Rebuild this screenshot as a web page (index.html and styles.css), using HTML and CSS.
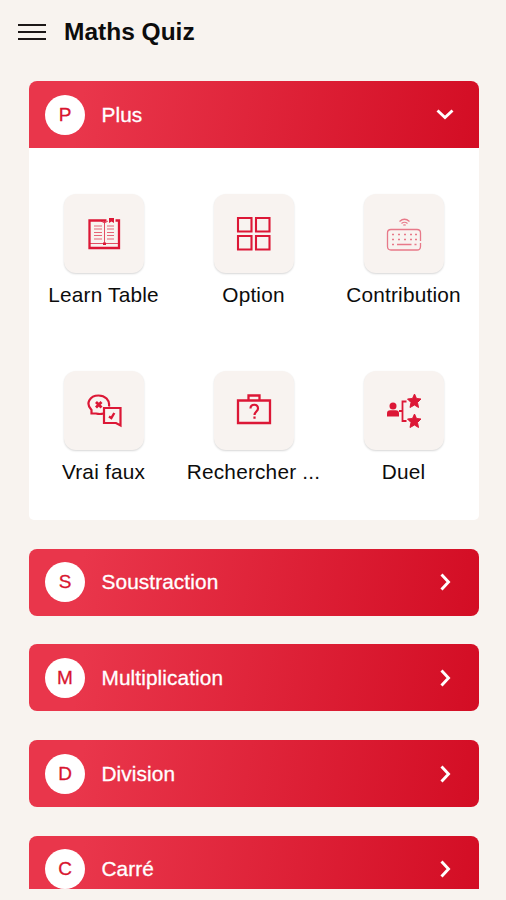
FILE: index.html
```html
<!DOCTYPE html>
<html lang="fr">
<head>
    <meta charset="UTF-8">
    <meta name="viewport" content="width=device-width, initial-scale=1.0">
    <title>Maths Quiz</title>
    <link rel="stylesheet" href="styles.css">
</head>
<body>
    <header class="topbar">
        <button class="menu-btn" aria-label="Menu">
            <span></span>
            <span></span>
            <span></span>
        </button>
        <h1>Maths Quiz</h1>
    </header>

    <main class="list">
        <section class="card open">
            <div class="card-header">
                <span class="badge">P</span>
                <span class="title">Plus</span>
                <svg class="chevron" viewBox="0 0 20 20"><path d="M2.500 5.500l7.500 7L17.500 5.500"/></svg>
            </div>
            <div class="panel">
                <div class="item">
                    <div class="tile">
                        <svg class="icon" viewBox="0 0 36 36">
                            <path d="M20.500 4.500H3.500V32H33V4.500H29.500" stroke-width="2.300"/>
                            <path d="M3.500 27.500H33M18.500 5V27M15 5L18.500 7L22 5" stroke-width="1" opacity=".75"/>
                            <path d="M8 10h8M8 13h8M8 16.500h8M8 19.500h8M8 23h8M21 10h7M21 13h7M21 16.500h7M21 19.500h7M21 23h7" stroke-width="1" opacity=".65"/>
                            <path class="fill" d="M23 2h5v5l-2.500-1.500L23 7zM17 26.500h3v2.500h-3z"/>
                        </svg>
                    </div>
                    <div class="label">Learn Table</div>
                </div>
                <div class="item">
                    <div class="tile">
                        <svg class="icon" viewBox="0 0 36 36">
                            <path d="M2 2h13.500v13.500H2zM20 2h13.500v13.500H20zM2 20h13.500v13.500H2zM20 20h13.500v13.500H20z" stroke-width="2.100"/>
                        </svg>
                    </div>
                    <div class="label">Option</div>
                </div>
                <div class="item">
                    <div class="tile">
                        <svg class="icon light" viewBox="0 0 36 36">
                            <path d="M34.500 27v3.500q0 3.500-3.500 3.500H5q-3.500 0-3.500-3.500V17q0-3.500 3.500-3.500h26q3.500 0 3.500 3.500v8" stroke-width="1.300"/>
                            <path d="M6 18.500h2m4 0h2m4 0h2m4 0h2m3 0h2M6 23.500h2m4 0h2m4 0h2m4 0h2m3 0h2M6 28.500h2m20.500 0h2" stroke-width="1.700"/>
                            <path d="M11 28.500h14.500" stroke-width="1.500"/>
                            <path d="M13.500 5.500q5-4.500 10 0M15.500 7.500q3-2.500 6 0M17.300 9.300q1.200-1 2.400 0" stroke-width="1.200"/>
                        </svg>
                    </div>
                    <div class="label">Contribution</div>
                </div>
                <div class="item">
                    <div class="tile">
                        <svg class="icon" viewBox="0 0 36 36">
                            <path d="M17.500 20.500Q14 21.500 10 20.500H5.500V17C-1 10.500 4 2.500 12.500 2.500C19 2.500 24 7 23 13.500" stroke-width="2.200"/>
                            <path d="M18 15H34.500V32.500L30 30H18z" stroke-width="2.200"/>
                            <path d="M10 9l5.500 5.500M15.500 9l-5.500 5.500" stroke-width="2.800"/>
                            <path d="M23 23.500l2.300 1.500 3-5" stroke-width="2.400"/>
                        </svg>
                    </div>
                    <div class="label">Vrai faux</div>
                </div>
                <div class="item">
                    <div class="tile">
                        <svg class="icon" viewBox="0 0 36 36">
                            <path d="M2 7.500h32v22.500H2z" stroke-width="2.300"/>
                            <path d="M12.500 7V2.500h11V7" stroke-width="2.300"/>
                            <path d="M14.500 15.500c0-5 7.500-5 7.500 0c0 3-3.500 3-3.500 6.500M18.500 23.500v2.300" stroke-width="2.200"/>
                        </svg>
                    </div>
                    <div class="label">Rechercher ...</div>
                </div>
                <div class="item">
                    <div class="tile">
                        <svg class="icon" viewBox="0 0 36 36">
                            <circle class="fill" cx="7" cy="13" r="3.500"/>
                            <path class="fill" d="M1 23.500v-3q0-3.300 3.300-3.300h5.400q3.300 0 3.300 3.300v3z"/>
                            <path d="M13 18h3.500M20.500 8.500h-4v19.500h4" stroke-width="1.800"/>
                            <path class="star" d="M28.500 1l2 4.500 4.500.5-3.500 3.500 1 5-4-2.500-4.500 2.500 1-5L21.500 6l5-.5z"/>
                            <path class="star" d="M28.500 21l2 4.500 4.500.5-3.500 3.500 1 5-4-2.500-4.500 2.500 1-5-3.500-3.500 5-.5z"/>
                        </svg>
                    </div>
                    <div class="label">Duel</div>
                </div>
            </div>
        </section>

        <section class="card">
            <div class="card-header">
                <span class="badge">S</span>
                <span class="title">Soustraction</span>
                <svg class="chevron" viewBox="0 0 20 20"><path d="M6.500 2.500l7 7.500-7 7.500"/></svg>
            </div>
        </section>
        <section class="card">
            <div class="card-header">
                <span class="badge">M</span>
                <span class="title">Multiplication</span>
                <svg class="chevron" viewBox="0 0 20 20"><path d="M6.500 2.500l7 7.500-7 7.500"/></svg>
            </div>
        </section>
        <section class="card">
            <div class="card-header">
                <span class="badge">D</span>
                <span class="title">Division</span>
                <svg class="chevron" viewBox="0 0 20 20"><path d="M6.500 2.500l7 7.500-7 7.500"/></svg>
            </div>
        </section>
        <section class="card">
            <div class="card-header">
                <span class="badge">C</span>
                <span class="title">Carré</span>
                <svg class="chevron" viewBox="0 0 20 20"><path d="M6.500 2.500l7 7.500-7 7.500"/></svg>
            </div>
        </section>
    </main>
</body>
</html>
```
FILE: styles.css
```css
* {
    box-sizing: border-box;
}
body {
    margin: 0;
    height: 900px;
    overflow: hidden;
    background-color: #f8f3ef;
    font-family: "Liberation Sans", Arial, sans-serif;
    color: #0c0c0c;
}
.topbar {
    display: flex;
    align-items: center;
    gap: 18px;
    height: 64px;
    padding-left: 18px;
}
.menu-btn {
    display: flex;
    flex-direction: column;
    gap: 5px;
    width: 28px;
    padding: 0;
    border: none;
    background: none;
}
.menu-btn span {
    height: 2.3px;
    background-color: #1c1717;
}
h1 {
    margin: 0;
    font-size: 24.5px;
    line-height: 28px;
}
/* scroll area, the last card is cut off at its bottom edge */
.list {
    display: flex;
    flex-direction: column;
    gap: 28.6px;
    height: 825px;
    padding: 17px 28px 0 28.5px;
    overflow: hidden;
}
.card {
    flex-shrink: 0;
    width: 450px;
    border-radius: 8px;
    overflow: hidden;
}
.open {
    height: 439.3px;
    border-radius: 8px 8px 5px 5px;
    background-color: #fff;
}
.card-header {
    display: flex;
    align-items: center;
    height: 67px;
    padding: 0 24px 0 16.5px;
    background: linear-gradient(100deg, #e9364b 12%, #d30d24 100%);
    color: #fff;
}
.badge {
    display: flex;
    align-items: center;
    justify-content: center;
    width: 40px;
    height: 40px;
    border-radius: 50%;
    background-color: #fff;
    color: #d8152f;
    font-size: 19px;
    -webkit-text-stroke: 0.3px #d8152f;
}
.title {
    flex: 1;
    margin-left: 16.5px;
    font-size: 20.8px;
    letter-spacing: 0.1px;
    -webkit-text-stroke: 0.3px #fff;
}
.chevron {
    width: 20px;
    height: 20px;
    fill: none;
    stroke: #fff;
    stroke-width: 2.9;
}
.panel {
    display: grid;
    grid-template-columns: repeat(3, 150px);
    grid-auto-rows: 177px;
    padding-top: 46px;
}
.item {
    display: flex;
    flex-direction: column;
    align-items: center;
}
.tile {
    display: flex;
    align-items: center;
    justify-content: center;
    width: 80px;
    height: 79px;
    border-radius: 12px;
    background-color: #f8f3f0;
    box-shadow: 0 1px 2px rgba(0,0,0,0.16);
}
.icon {
    width: 36px;
    height: 36px;
    fill: none;
    stroke: #dc1736;
}
.icon .fill {
    fill: #dc1736;
    stroke: none;
}
.icon .star {
    fill: #dc1736;
    stroke-width: 1;
    stroke-linejoin: round;
}
.light {
    opacity: 0.55;
}
.label {
    margin-top: 10px;
    font-size: 20.8px;
    line-height: 24px;
    letter-spacing: 0.2px;
    white-space: nowrap;
}
```
